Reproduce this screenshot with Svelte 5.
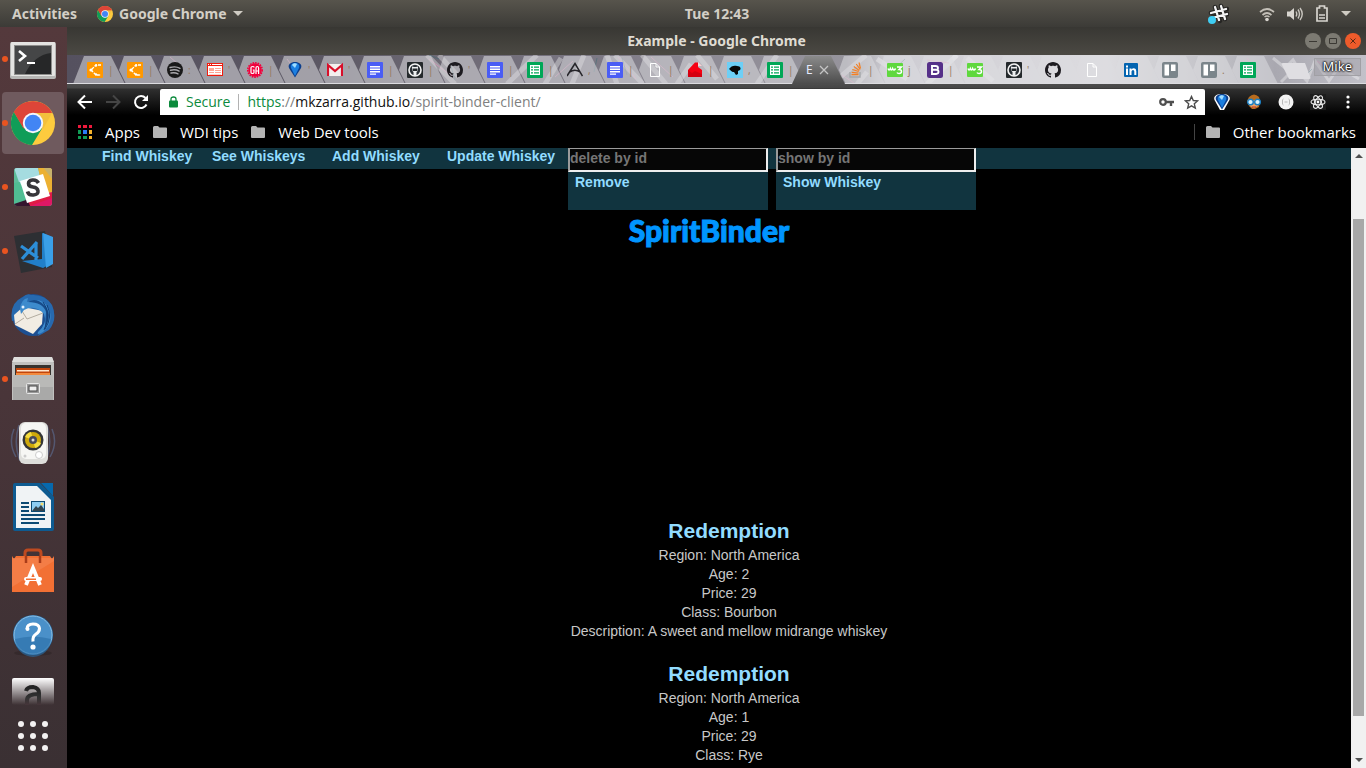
<script>
  const before = [
    ['cc', '|'], ['cc', '|'], ['spotify', ':'], ['news', "'"], ['ga', '|'], ['balloon', "'"],
    ['gmail', "'"], ['docs', '|'], ['ghbox', '|'], ['github', "'"], ['docs', '|'], ['sheets', '|'],
    ['compass', ','], ['docs', '|'], ['file', '|'], ['house', '|'], ['bird', ','], ['sheets', '|']
  ];
  const after = [
    ['stack', '|'], ['w3', 'j'], ['bootstrap', '|'], ['w3', ''], ['ghbox', "'"], ['github', ''],
    ['file', ''], ['linkedin', ''], ['trello', ''], ['trello', '.'], ['sheets', '']
  ];
  const links = ['Find Whiskey', 'See Whiskeys', 'Add Whiskey', 'Update Whiskey'];
  const forms = [
    { id: 'delete-id', hint: 'delete by id', action: 'Remove' },
    { id: 'show-id', hint: 'show by id', action: 'Show Whiskey' }
  ];
  const whiskeys = [
    { name: 'Redemption', rows: ['Region: North America', 'Age: 2', 'Price: 29', 'Class: Bourbon', 'Description: A sweet and mellow midrange whiskey'] },
    { name: 'Redemption', rows: ['Region: North America', 'Age: 1', 'Price: 29', 'Class: Rye'] }
  ];
  const dock = [
    ['Terminal', true], ['Chrome', true], ['Slack', true], ['Code', true], ['Thunderbird', false],
    ['Files', true], ['Rhythmbox', false], ['Writer', false], ['Software', false], ['Help', false]
  ];
  const dots = [5, 17, 29];
  const octocat = 'M8 0C3.58 0 0 3.58 0 8c0 3.54 2.29 6.53 5.47 7.59.4.07.55-.17.55-.38 0-.19-.01-.82-.01-1.49-2.01.37-2.53-.49-2.69-.94-.09-.23-.48-.94-.82-1.13-.28-.15-.68-.52-.01-.53.63-.01 1.08.58 1.23.82.72 1.21 1.87.87 2.33.66.07-.52.28-.87.51-1.07-1.78-.2-3.64-.89-3.64-3.95 0-.87.31-1.59.82-2.15-.08-.2-.36-1.02.08-2.12 0 0 .67-.21 2.2.82.64-.18 1.32-.27 2-.27s1.36.09 2 .27c1.53-1.04 2.2-.82 2.2-.82.44 1.1.16 1.92.08 2.12.51.56.82 1.27.82 2.15 0 3.07-1.87 3.75-3.65 3.95.29.25.54.73.54 1.48 0 1.07-.01 1.93-.01 2.2 0 .21.15.46.55.38A8.01 8.01 0 0 0 16 8c0-4.42-3.58-8-8-8z';
</script>

{#snippet chrome(size)}
  <svg width={size} height={size} viewBox="0 0 44 44" aria-hidden="true">
    <circle cx="22" cy="22" r="22" fill="#fdcb3e" />
    <path d="M2.9 11A22 22 0 0 1 41.1 11.5L22 12 13 27z" fill="#dd4538" />
    <path d="M41.1 12H22l-4 4 14 12z" fill="#e9b43a" opacity=".5" />
    <path d="M2.9 11A22 22 0 0 0 21 44L31 27.5 22 24 12 26z" fill="#109d58" />
    <path d="M2.9 11 12.5 27.5 22 22 22 12H41A22 22 0 0 0 2.9 11z" fill="#dd4538" />
    <circle cx="22" cy="22" r="10.2" fill="#f4f6fb" />
    <circle cx="22" cy="22" r="8.3" fill="#4285f4" />
  </svg>
{/snippet}

{#snippet balloon()}
  <path d="M8 15.5 2 6C.5 2.5 4 0 8 0s7.5 2.5 6 6z" fill="#0b3e8c" />
  <path d="M8 14 4 6c-1-3 1-5 4-5s5 2 4 5z" fill="#1c7fe0" />
  <path d="M5 3c1-2 4-2 5-1L8 6z" fill="#9fdcff" />
{/snippet}

{#snippet favicon(name)}
  <svg class="fav" width="16" height="16" viewBox="0 0 16 16" aria-hidden="true">
    {#if name === 'cc'}
      <rect width="16" height="16" rx="1" fill="#ff9800" />
      <path d="M14 3H9L4 8l5 5h5" fill="none" stroke="#fff" stroke-width="1.3" stroke-dasharray="3 1" />
      <circle cx="4" cy="8" r="1.6" fill="#fff" /><circle cx="9" cy="3.5" r="1.2" fill="#fff" /><circle cx="9" cy="12.5" r="1.2" fill="#fff" />
    {:else if name === 'spotify'}
      <circle cx="8" cy="8" r="8" fill="#191919" />
      <path d="M3 5.5c3.5-1 7.5-.6 10 .8M3.5 8.3c3-.8 6.4-.4 8.600.8M4 11c2.500-.6 5-.3 7 .8" fill="none" stroke="#aaa9ad" stroke-width="1.4" stroke-linecap="round" />
    {:else if name === 'news'}
      <path d="M0 1h16v13H0z" fill="#f01c0e" /><path d="M1 4h14v9H1zM1 2h1v1H1zM3 2h1v1H3zM5 2h10v1H5z" fill="#fff" />
      <path d="M2 6h5v3H2zM8 6h6v1H8zM8 8h6v1H8zM2 10h5v1H2zM8 10h6v1H8zM2 12h12v.5H2z" fill="#ffa694" />
    {:else if name === 'ga'}
      <circle cx="8" cy="8" r="6.7" fill="#f2003c" /><circle cx="8" cy="8" r="7.2" fill="none" stroke="#f2003c" stroke-width="1.6" stroke-dasharray="1.6 1" />
      <path d="M7 5.5V5Q7 4.500 5.500 4.500T4 5.500v5q0 1 1.500 1T7 10.500V8H5.800M9 12V6q0-1.500 1.300-1.500T11.600 6v6M9 9h2.600" fill="none" stroke="#fff" stroke-width="1.2" />
    {:else if name === 'balloon'}
      {@render balloon()}
    {:else if name === 'gmail'}
      <path d="M0 2h16v12H0z" fill="#f3efee" /><path d="M1 14V3l7 6 7-6v11" fill="none" stroke="#d80f2a" stroke-width="2.2" />
    {:else if name === 'docs'}
      <rect width="16" height="16" rx="1" fill="#4a5df5" /><path d="M3 4h10v1.400H3zM3 6.500h10v1.400H3zM3 9h10v1.400H3zM3 11.500h6v1.200H3z" fill="#fff" />
    {:else if name === 'sheets'}
      <rect width="16" height="16" rx="1" fill="#00a757" /><path d="M3 3h10v10H3z" fill="#fff" /><path d="M4 4.500h2v1.200H4zM7 4.500h5v1.200H7zM4 7.300h2v1.200H4zM7 7.300h5v1.200H7zM4 10.200h2v1.200H4zM7 10.200h5v1.200H7z" fill="#00a757" />
    {:else if name === 'ghbox'}
      <rect width="16" height="16" rx="1" fill="#24292c" /><circle cx="8" cy="8" r="6" fill="#2b3137" stroke="#f4f4f4" stroke-width="1.6" />
      <path d="M5 4.500 7 5h2l2-.5v4L9.500 10v4h-3v-4L5 8.500z" fill="#eef0f1" /><path d="M5.500 6.500h5v2.500h-5z" fill="#24292c" />
    {:else if name === 'github'}
      <path d={octocat} fill="#1d1b20" />
    {:else if name === 'compass'}
      <path d="M0 14 8 1.500 15.500 14M2.500 10Q8 6.500 13 10" fill="none" stroke="#26252a" stroke-width="1.5" />
    {:else if name === 'file'}
      <path d="M3.500 1.500h5.500l3.500 3.500v9.500h-9zM9 1.500V5h3.500" fill="none" stroke="#fff" />
    {:else if name === 'house'}
      <path d="M1 8 8 .5h3V5l4 3v7H1z" fill="#f60012" /><path d="M11 0v4h4z" fill="#fbd0d2" /><path d="m1 8 4 3 3-2 7 3v3H1z" fill="#d50010" />
    {:else if name === 'bird'}
      <rect width="16" height="16" fill="#6dcff6" /><path d="M2 7c2-3 5-4 8-3 4 0 4 3 3 4l-2 1v3l-2 1-2-3c-3 0-3-2-5-3z" fill="#090909" />
    {:else if name === 'stack'}
      <path d="M3 10v5h10v-5" fill="none" stroke="#a5a8ab" stroke-width="1.4" /><path d="M4.500 12.700h7M4.700 10.300l6.800.8M5.300 7.500l6.400 2M6.800 4.500l5.500 4M9.300 2l3.900 5.500M12 .5l1.500 6" stroke="#f48024" stroke-width="1.2" />
    {:else if name === 'w3'}
      <rect y="1" width="16" height="14" rx="1" fill="#5fd83e" /><path d="M1 6.500q1 3 2.300 0 1 3 2.300 0 1 3 3 0M10 5h4.500L12 7.500q2.500 0 2.500 2t-2.500 2q-1.500 0-2-1" fill="none" stroke="#fff" stroke-width="1.5" />
    {:else if name === 'bootstrap'}
      <rect width="16" height="16" rx="2.5" fill="#563089" /><path d="M5 4h3.500Q11 4 11 6T8.500 7.800H5zM5 7.800h4q2.500 0 2.500 2T9 12H5z" fill="none" stroke="#fff" stroke-width="1.9" />
    {:else if name === 'linkedin'}
      <rect x="1" y="1" width="14" height="14" rx="1" fill="#0364b0" /><path d="M3 6.500h2V13H3zM3 3.500h2v2H3zM6.500 6.500h2v1q1-1.300 2.500-1.200 2.300.2 2.300 3V13h-2V9.500Q11.300 8 10 8T8.500 9.500V13h-2z" fill="#fff" />
    {:else if name === 'trello'}
      <rect width="16" height="16" rx="2" fill="#7b858b" /><path d="M2.500 2.500h4.500v11H2.500zM9 2.500h4.500v6.500H9z" fill="#fff" />
    {/if}
  </svg>
{/snippet}

{#snippet tab(t, narrow)}
  <div class="tab" class:narrow>
    {@render favicon(t[0])}
    {#if t[1]}<span class="bit">{t[1]}</span>{/if}
  </div>
{/snippet}

{#snippet folder()}
  <svg width="14" height="12" viewBox="0 0 14 12" aria-hidden="true"><path d="M0 1.500Q0 0 1.500 0H5l1.500 1.500H13q1 0 1 1V11q0 1-1 1H1q-1 0-1-1z" fill="#b4b4b4" /></svg>
{/snippet}

{#snippet dockIcon(name)}
  {#if name === 'Chrome'}
    {@render chrome(44)}
  {:else}
    <svg width="48" height="48" viewBox="0 0 48 48" aria-hidden="true">
      {#if name === 'Terminal'}
        <rect x="1" y="7" width="46" height="37" rx="2" fill="#b7b7b5" /><rect x="2" y="7" width="44" height="34" rx="1" fill="#e4e4e2" />
        <path d="M5 10h38v30H5z" fill="#8d8d8b" /><path d="M6 11h36v28H6z" fill="#262728" /><path d="M6 11h36v7Q25 20 16 39H6z" fill="#454647" />
        <path d="m10 16 6 5-6 5" fill="none" stroke="#fff" stroke-width="2.6" /><path d="M18 27h8v2h-8z" fill="#fff" />
      {:else if name === 'Slack'}
        <clipPath id="sl"><rect x="5" y="5" width="38" height="38" rx="3" /></clipPath>
        <g clip-path="url(#sl)">
          <path d="M0 0h48v48H0z" fill="#5dbd9a" /><path d="M5 5h24l3 12-21 5z" fill="#a5dce0" /><path d="M29 5h14v27l-7 2z" fill="#ecb032" /><path d="M34 4h9v12z" fill="#c5b06c" />
          <path d="M18 36 43 29v16H18z" fill="#e01765" /><path d="M17 37l26-7v5l-25 9z" fill="#df1b45" /><path d="M5 38l13-2 4 9H5z" fill="#35152f" /><path d="M5 20l6-1 6 18-12 4z" fill="#50bd93" />
          <path d="m11 18 23-7 7 22-23 7z" fill="#fff" />
        </g>
        <path d="M29.500 20q-2-3.500-6-3t-4 3.500 4.500 3.500 5 4-4.500 4-6-3.500" fill="none" stroke="#37363a" stroke-width="3.6" />
      {:else if name === 'Code'}
        <path d="m5 9 31-5 7 36-31 6z" fill="#2d2f33" /><path d="M33 6v26l-20 2 21 7 9-5V10z" fill="#217fc9" /><path d="M34 6l10 4v27l-7 4z" fill="#3a9fe8" />
        <path d="M12 19 29 31M28 15 13 32M27 17v16" fill="none" stroke="#2c8ed8" stroke-width="3.2" />
      {:else if name === 'Thunderbird'}
        <circle cx="24" cy="24" r="21" fill="#1d4f91" /><path d="M3 30Q0 12 14 6q4-4 8-2 14-1 21 10 6 14-3 25l-11 6 7-14-1-10z" fill="#2769ae" />
        <path d="M5 24 14 16l20 4-1 13-9 10L6 34z" fill="#f1ece3" /><path d="m13 20 5 8 16-6M6 33l9-6" fill="none" stroke="#b3aca0" />
        <path d="M11 18q1-10 8-11l-1 4q15-6 22 7 5 13-6 23-7 4-5 0 10-9 6-18Q26 13 15 19l-3 4z" fill="#3d8bcd" /><path d="M19 11q15 0 18 10l-1 15q8-13-1-22-8-8-16-3z" fill="#174b8a" /><path d="M38 14q6 12-2 24M34 11q9 12 1 28" fill="none" stroke="#123f78" /><circle cx="14" cy="16" r="1.5" fill="#e0f0ff" />
      {:else if name === 'Files'}
        <path d="M5 2h38l2 6v37H3V8z" fill="#c1c1bf" /><path d="M5 2h38l2 5H3z" fill="#dededc" /><path d="M6 10h36v12H6z" fill="#37332f" />
        <path d="M7 13h34v8H7z" fill="#c1450c" /><path d="M8 15h32v1.500H8z" fill="#ffe4cb" /><path d="M7 18h34v3H7z" fill="#f38a3d" /><path d="M4 20h40v25H4z" fill="#a9a9a8" /><path d="M4 20h40v12H4z" fill="#b9b9b7" />
        <rect x="17.5" y="28.5" width="13" height="10" rx="1" fill="#999" stroke="#e8e8e8" /><rect x="20" y="31" width="8" height="5" fill="#eee" stroke="#444" />
      {:else if name === 'Rhythmbox'}
        <path d="M5 10Q-1 24 7 38M10 6Q4 24 11 42M43 10q6 14-2 28M38 6q6 18-1 36" fill="none" stroke="#5d6f96" stroke-width="1.5" opacity=".6" />
        <rect x="10" y="3" width="29" height="42" rx="6" fill="#dededb" /><rect x="12" y="4" width="25" height="36" rx="5" fill="#f6f6f4" />
        <circle cx="24" cy="21" r="10.5" fill="#343638" /><circle cx="24" cy="21" r="8" fill="#cda80b" /><path d="M24 21 16 18a8 8 0 0 1 6-5zM24 21l8 3a8 8 0 0 1-6 5z" fill="#f5dc3e" /><circle cx="24" cy="21" r="4" fill="#474959" /><circle cx="24" cy="21" r="1.5" fill="#dadada" />
        <circle cx="30" cy="36" r="3.5" fill="#fff" stroke="#ccc" /><circle cx="16" cy="37" r="1.5" fill="#ccc" />
      {:else if name === 'Writer'}
        <path d="M6 0h25l14 14v32q0 2-2 2H6q-2 0-2-2V2q0-2 2-2z" fill="#0e5b91" /><path d="M7 3h21l14 14v28H7z" fill="#f0f3f5" /><path d="M32 0h12v13z" fill="#0769ad" />
        <path d="M12 19h8v2h-8zM12 23h8v2h-8zM12 27h8v2h-8zM12 31h24v2H12zM12 35h24v2H12zM12 39h18v2H12z" fill="#0d4a73" /><path d="M22 18h14v11H22z" fill="#0d4a73" /><path d="M23 19h12v9H23z" fill="#8dcdf2" /><circle cx="33" cy="21" r="1.5" fill="#f6db6c" /><path d="m23 28 4-5 2 2 3-3 3 4v2z" fill="#33454f" />
      {:else if name === 'Software'}
        <path d="M16 14V6q0-3 3-3h10q3 0 3 3v8" fill="none" stroke="#be4a20" stroke-width="3" /><path d="M3 9l2 3 2-3h34l2 3 2-3v36H3z" fill="#f27034" /><path d="M3 11h42v3L3 40z" fill="#f58654" opacity=".6" /><path d="M17 9v7M31 9v7" stroke="#a93c19" stroke-width="2.5" />
        <path d="m17 38 7-17 7 17" fill="none" stroke="#fff" stroke-width="3.8" /><rect x="15" y="30" width="18" height="4" rx="2" fill="#fff" /><path d="M17 31.500h10v1.500H17z" fill="#f27034" />
      {:else if name === 'Help'}
        <ellipse cx="24" cy="42" rx="19" ry="3" fill="#271d20" opacity=".4" /><circle cx="24" cy="24" r="20" fill="#286ea8" /><circle cx="24" cy="24" r="19" fill="#4a90c9" stroke="#8dbfe2" /><path d="M6 28q18-5 36 0a18 18 0 0 1-36 0z" fill="#2a6ea7" opacity=".6" />
        <path d="M18 18q0-5 6-5t6.500 4.500q0 3.500-4 6-3 2-2.500 7" fill="none" stroke="#fff" stroke-width="3" /><circle cx="18.5" cy="18" r="2" fill="#fff" /><circle cx="24" cy="36" r="2.6" fill="#fff" />
      {/if}
    </svg>
  {/if}
{/snippet}

<div class="desktop">
  <header class="panel">
    <div class="left">
      <button>Activities</button>
      <button class="app">{@render chrome(16)}<span>Google Chrome</span><i class="caret"></i></button>
    </div>
    <time>Tue 12:43</time>
    <div class="tray">
      <svg width="22" height="22" viewBox="0 0 22 22" aria-hidden="true">
        <path d="m8 4 5 14M14 3l4 13M4 10l16-4M5 15l16-4" stroke="#262523" stroke-width="4.5" stroke-linecap="round" /><path d="m8 4 4 13M14 3l4 13M4 10l15-4M5 15l15-4" stroke="#f5f5f5" stroke-width="2.3" stroke-linecap="round" /><circle cx="5" cy="17" r="4" fill="#3fcdf3" />
      </svg>
      <svg class="wifi" width="16" height="16" viewBox="0 0 16 16" aria-hidden="true"><path d="M1 6q7-6 14 0M3.500 9q4.500-4 9 0" fill="none" stroke="#c4c0b8" stroke-width="1.7" /><path d="M5.500 11q2.500-2 5 0" fill="none" stroke="#c4c0b8" stroke-width="1.5" /><circle cx="8" cy="13.5" r="1.8" fill="#d8d5cf" /></svg>
      <svg width="16" height="16" viewBox="0 0 16 16" aria-hidden="true"><path d="M0 5.500h3L7 2v12l-4-3.500H0z" fill="#d8d5cf" /><path d="M9 5.500q1.500 2.500 0 5M11 3.500q3 4.500 0 9M13 2q4.500 6 0 12" fill="none" stroke="#c9c6bf" stroke-width="1.4" /></svg>
      <svg width="14" height="17" viewBox="0 0 14 17" aria-hidden="true"><path d="M2 3h2.500V1h5v2H12v13H2zM4 10h6M4 13h6" fill="none" stroke="#d8d5cf" stroke-width="1.7" /></svg>
      <i class="caret"></i>
    </div>
  </header>

  <div class="body">
    <aside class="dock">
      {#each dock as [name, running]}
        <button class="launcher" class:current={name === 'Chrome'} class:running aria-label={name}>{@render dockIcon(name)}</button>
      {/each}
      <button class="amazon" aria-label="Amazon">
        <svg width="42" height="27" viewBox="0 0 42 27" aria-hidden="true">
          <defs><linearGradient id="az" x2="0" y2="1"><stop stop-color="#fff" /><stop offset="1" stop-color="#fff" stop-opacity="0" /></linearGradient><linearGradient id="ak" x2="0" y2="1"><stop stop-color="#222" /><stop offset=".6" stop-color="#333" /><stop offset="1" stop-color="#46353a" /></linearGradient></defs>
          <rect width="42" height="27" rx="2" fill="url(#az)" /><path d="M14 13q1-4 7-4 6 1 6 6v12M27 16q-12 0-12 6v5" fill="none" stroke="url(#ak)" stroke-width="4" />
        </svg>
      </button>
      <button class="apps" aria-label="Show Applications">
        <svg width="34" height="34" viewBox="0 0 34 34" aria-hidden="true">{#each dots as y}{#each dots as x}<circle cx={x} cy={y} r="3" fill="#f3f1f1" />{/each}{/each}</svg>
      </button>
    </aside>

    <main class="window">
      <div class="titlebar">
        <span>Example - Google Chrome</span>
        <div class="controls">
          <button aria-label="Minimize"><svg width="16" height="16" viewBox="0 0 16 16"><circle cx="8" cy="8" r="8" fill="#7c7a72" /><path d="M4 8.500h8" stroke="#3b3934" /></svg></button>
          <button aria-label="Maximize"><svg width="16" height="16" viewBox="0 0 16 16"><circle cx="8" cy="8" r="8" fill="#7c7a72" /><path d="M4.500 5.500h7v5h-7z" fill="none" stroke="#3b3934" /></svg></button>
          <button aria-label="Close"><svg width="16" height="16" viewBox="0 0 16 16"><circle cx="8" cy="8" r="8" fill="#ee5b2b" /><path d="m5.500 5.500 5 5m0-5-5 5" stroke="#5a2a14" /></svg></button>
        </div>
      </div>

      <div class="tabs">
        <svg class="art" viewBox="0 0 1299 29" preserveAspectRatio="none" aria-hidden="true">
          <g fill="none" stroke="#fff" stroke-width="5" opacity=".35">
            <path d="m360 0 28 29M372 0l20 22M440 29l30-29M478 29l16-26M505 29l12-29M540 0l10 29M548 0l28 29M575 0l24 29M610 29l14-20M630 0l20 24M690 29l20-29M765 29l34-29M790 29l10-12M810 4l30 20M860 29l30-29M900 3l26 23" />
          </g>
          <g fill="none" stroke="#ef8fc0" stroke-width="1" opacity=".5"><path d="m103 2 8 7M220 4l6 8M362 4l24 18M488 22l18-16M551 2l18 22M584 2l22 20M775 20l12 8M860 5l22 3M1180 3l10 12M1250 6l14 10" /></g>
          <g fill="none" stroke="#3b6d75" stroke-width="1" opacity=".5"><path d="m362 0 10 4M383 8l5 17M530 3l-3 14M555 3l5 17M820 21l18-17M1235 24l10-10" /></g>
          <g fill="none" stroke="#fff" stroke-width="3" opacity=".35"><path d="m1206 3 12 10 8-8 10 16M1214 27l14-14 12 13 8-20 14 20 10-14 20 12" /></g>
        </svg>
        {#each before as t}{@render tab(t, false)}{/each}
        <div class="tab active"><span class="cut">E</span><button aria-label="Close tab"><svg width="10" height="10" viewBox="0 0 10 10"><path d="m1 1 8 8m0-8-8 8" stroke="#c5c5c5" stroke-width="1.3" /></svg></button></div>
        {#each after as t, i}{@render tab(t, i > 2)}{/each}
        <button class="newtab" aria-label="New tab"></button>
        <span class="user">Mike</span>
      </div>

      <div class="toolbar">
        <button aria-label="Back"><svg width="16" height="16" viewBox="0 0 16 16"><path d="M8 1.500 1.500 8 8 14.500M2 8h13" fill="none" stroke="#fff" stroke-width="2" /></svg></button>
        <button aria-label="Forward"><svg width="16" height="16" viewBox="0 0 16 16"><path d="M8 1.500 14.500 8 8 14.500M14 8H1" fill="none" stroke="#454545" stroke-width="2" /></svg></button>
        <button aria-label="Reload"><svg width="16" height="16" viewBox="0 0 16 16"><path d="M13.500 10.500A6 6 0 1 1 12.500 4" fill="none" stroke="#fff" stroke-width="2" /><path d="M15 1v6H9z" fill="#fff" /></svg></button>
        <div class="omni">
          <svg width="9" height="12" viewBox="0 0 9 12" aria-hidden="true"><path d="M2 5V3q0-2 2.500-2T7 3v2" fill="none" stroke="#0b8a3c" stroke-width="1.3" /><rect y="4.5" width="9" height="7" rx="1" fill="#0b8a3c" /></svg>
          <span class="secure">Secure</span>
          <span class="url"><b>https</b><i>://</i>mkzarra.github.io<i>/spirit-binder-client/</i></span>
          <svg width="15" height="12" viewBox="0 0 15 12" aria-hidden="true"><circle cx="4" cy="6" r="2.8" fill="none" stroke="#4f4f4f" stroke-width="2.2" /><path d="M7 6h8M12 6v4" fill="none" stroke="#4f4f4f" stroke-width="2.4" /></svg>
          <svg class="star" width="15" height="15" viewBox="0 0 15 15" aria-hidden="true"><path d="m7.500 1.500 1.800 4 4.200.4-3.200 2.900 1 4.200-3.800-2.200L3.700 13l1-4.200L1.500 5.900l4.200-.4z" fill="none" stroke="#4c4c4c" stroke-width="1.4" /></svg>
        </div>
        <div class="exts">
          <svg width="16" height="16" viewBox="0 0 16 16" aria-hidden="true"><path d="M6 16 .5 6C-1 2 3 0 8 0s9 2 7.500 6L10 16z" fill="#fff" />{@render balloon()}</svg>
          <svg width="16" height="16" viewBox="0 0 16 16" aria-hidden="true"><path d="M3 3q5-5 10 0l1 4-1 6-4 2H6l-3-3-2-5z" fill="#b86b1d" /><path d="M4 6h8v6l-4 2-4-2z" fill="#f2a565" /><circle cx="4.5" cy="8" r="2.8" fill="#d8f3ff" stroke="#1a7fc4" stroke-width="1.4" /><circle cx="11.5" cy="8" r="2.8" fill="#d8f3ff" stroke="#1a7fc4" stroke-width="1.4" /><path d="M6 13h4" stroke="#b3302c" /></svg>
          <svg width="16" height="16" viewBox="0 0 16 16" aria-hidden="true"><circle cx="8" cy="8" r="7.5" fill="#f3f3f3" /><path d="M5.500 5Q4 5 4.500 8q-.5 3 1 3M10.500 5q1.500 0 1 3 .5 3-1 3M6.500 8h3" fill="none" stroke="#b9b9b9" /></svg>
          <svg width="16" height="16" viewBox="0 0 16 16" aria-hidden="true"><rect width="16" height="16" fill="#1c1c1c" /><g fill="none" stroke="#ececec" stroke-width="1.1"><ellipse cx="8" cy="8" rx="7" ry="2.8" /><ellipse cx="8" cy="8" rx="7" ry="2.8" transform="rotate(60 8 8)" /><ellipse cx="8" cy="8" rx="7" ry="2.8" transform="rotate(120 8 8)" /></g><circle cx="8" cy="8" r="1.4" fill="#fff" /></svg>
          <svg class="more" width="4" height="14" viewBox="0 0 4 14" aria-hidden="true"><circle cx="2" cy="2" r="1.6" fill="#fff" /><circle cx="2" cy="7" r="1.6" fill="#fff" /><circle cx="2" cy="12" r="1.6" fill="#fff" /></svg>
        </div>
      </div>

      <div class="bookmarks">
        <svg width="14" height="14" viewBox="0 0 14 14" aria-hidden="true"><path d="M0 0h3v3H0zM5 0h4v3H5zM11 0h3v3h-3z" fill="#f0193c" /><path d="M0 5h3v4H0zM0 11h3v3H0zM5 11h4v3H5z" fill="#119c55" /><path d="M5 5h4v4H5z" fill="#2c7cf6" /><path d="M11 5h3v4h-3zM11 11h3v3h-3z" fill="#f5b32c" /></svg>
        <a href="#apps">Apps</a>
        {@render folder()}<a href="#wdi">WDI tips</a>
        {@render folder()}<a href="#web">Web Dev tools</a>
        <div class="other">{@render folder()}<a href="#other">Other bookmarks</a></div>
      </div>

      <div class="view">
        <div class="page">
          <nav>
            <div class="links">{#each links as l}<a href="#nav">{l}</a>{/each}</div>
            {#each forms as f}
              <form>
                <input id={f.id} type="text" aria-label={f.hint} placeholder={f.hint} />
                <button type="button">{f.action}</button>
              </form>
            {/each}
          </nav>
          <h1>SpiritBinder</h1>
          <ul>
            {#each whiskeys as w}
              <li>
                <h2>{w.name}</h2>
                {#each w.rows as r}<p>{r}</p>{/each}
              </li>
            {/each}
          </ul>
        </div>
        <div class="scroll" aria-hidden="true">
          <i class="up"></i><div class="track"><div class="thumb"></div></div><i class="down"></i>
        </div>
      </div>
    </main>
  </div>
</div>

<style>
  :global(body) { background: #000; overflow: hidden; }
  .desktop { display: flex; flex-direction: column; height: 100vh; overflow: hidden; font: 14px/18px "Noto Sans", sans-serif; color: #dfdbd2; }
  button { border: 0; padding: 0; background: none; color: inherit; font: inherit; display: flex; align-items: center; }
  a { color: inherit; text-decoration: none; }
  svg { display: block; flex: none; }

  .panel { height: 27px; flex: none; display: grid; grid-template-columns: 1fr auto 1fr; align-items: center; background: linear-gradient(#57544c, #3c3b37); font-weight: 700; line-height: 16px; color: #d3cfc6; }
  .left { display: flex; gap: 20px; padding-left: 12px; }
  .app { gap: 6px; }
  .caret { border: 5px solid transparent; border-top-color: #cfcbc3; border-bottom: 0; }
  .panel time { padding-left: 68px; }
  .tray { display: flex; justify-content: flex-end; align-items: center; gap: 12px; padding-right: 15px; }
  .wifi { margin-left: 18px; }

  .body { flex: 1; display: flex; min-height: 0; }
  .dock { width: 67px; flex: none; display: flex; flex-direction: column; padding-top: 1px; box-sizing: border-box; background: linear-gradient(#54393c, #493539 50%, #3a3033); }
  .launcher { position: relative; flex: none; height: 62px; width: 62px; margin: 0 2px 2px; justify-content: center; border-radius: 4px; }
  .current { background: #6f5a5e; }
  .running::before { content: ""; position: absolute; left: 0; top: 28px; width: 6px; height: 6px; border-radius: 3px; background: #e95420; }
  .amazon { margin: 10px 0 0 12px; }
  .apps { margin: auto 0 15px 16px; }

  .window { flex: 1; min-width: 0; display: flex; flex-direction: column; }
  .titlebar { height: 28px; flex: none; display: grid; grid-template-columns: 1fr auto 1fr; align-items: center; background: linear-gradient(#383733, #4b4943); font-weight: 700; }
  .titlebar span { grid-column: 2; }
  .controls { display: flex; gap: 4px; justify-content: flex-end; padding-right: 5px; }

  .tabs { position: relative; height: 29px; flex: none; display: flex; padding-left: 12px; box-sizing: border-box; overflow: hidden; isolation: isolate; background: linear-gradient(90deg, #55515f, #5c5864 20%, #6b6772 27%, #77737f 38%, #8f8c96 50%, #96949c 60%, #cdccd2 63%, #dddce0 80%, #c3c3c8 88%, #a9a8b0 93%, #c2c1c9); }
  .tabs::after { content: ""; position: absolute; left: 0; right: 0; bottom: 0; height: 1px; background: #dcdce0; z-index: -1; }
  .art { position: absolute; inset: 0; width: 100%; height: 100%; z-index: -2; }
  .tab { position: relative; flex: none; width: 40px; display: flex; align-items: center; gap: 5px; box-sizing: border-box; padding-left: 8px; }
  .narrow { width: 39px; }
  .tab::before { content: ""; position: absolute; z-index: -1; left: -6px; width: 52px; top: 1px; bottom: 0; background: #dcdce0; opacity: .55; clip-path: polygon(11px 0, 38px 0, 52px 100%, 13px 100%, 6px 50%); }
  .art + .tab::before { clip-path: polygon(11px 0, 38px 0, 52px 100%, 0 100%); }
  .active::before { left: -7px; width: 53px; background: linear-gradient(#8b8b8b, #4c4c4c); opacity: 1; z-index: 0; clip-path: polygon(13px 0, 39px 0, 53px 100%, 0 100%); }
  .active > * { position: relative; }
  .cut { width: 9px; font-size: 12px; color: #e6ebff; }
  .active { gap: 4px; padding-left: 7px; }
  .bit { line-height: 14px; font-size: 10px; color: #97795f; }
  .newtab { width: 30px; height: 16px; margin: 8px 0 0 10px; background: #dfdee2; border-radius: 2px; clip-path: polygon(0 0, 24px 0, 100% 100%, 8px 100%); }
  .user { margin: 3px 5px 0 auto; height: 16px; line-height: 15px; padding: 0 8px; border: 1px solid #a1a0a5; color: #fff; font-size: 13px; background: #9b99a066; text-shadow: 0 0 2px #000, 0 0 2px #000, 0 0 2px #000; }

  .toolbar { height: 31px; margin-top: 1px; margin-bottom: -1px; flex: none; display: flex; align-items: flex-end; gap: 12px; padding-left: 10px; background: linear-gradient(#4d4d4d, #464646 4px, #2f2f2f 5px, #000); }
  .toolbar { margin: 0; }
  .toolbar button { height: 26px; }
  .omni { flex: 1; height: 26px; display: flex; align-items: center; margin: 0 -3px 0 -1px; padding: 0 6px 0 9px; background: #fff; border-radius: 2px 2px 0 0; color: #111; font: 14px/18px "Open Sans", sans-serif; }
  .secure { color: #0b8a3c; padding: 0 8px; margin-right: 8px; border-right: 1px solid #b2b2b2; line-height: 16px; }
  .url { flex: 1; }
  .url b { font-weight: 400; color: #0b8a3c; }
  .url i { font-style: normal; color: #808080; }
  .star { margin-left: 10px; }
  .exts { display: flex; gap: 16px; height: 26px; align-items: center; padding-right: 16px; }
  .more { margin-left: 4px; }

  .bookmarks { height: 33px; flex: none; display: flex; align-items: center; gap: 13px; padding: 0 10px 0 11px; box-sizing: border-box; background: #000; color: #fff; font: 15px/18px "Open Sans", sans-serif; }
  .other { margin-left: auto; display: flex; align-items: center; gap: 13px; border-left: 1px solid #444; padding-left: 11px; line-height: 16px; }

  .view { flex: 1; min-height: 0; display: flex; background: #000; }
  .page { flex: 1; min-width: 0; overflow: hidden; font: 14px/19px "Liberation Sans", Arial, sans-serif; color: #c8c8c8; text-align: center; }
  nav { height: 21px; display: flex; align-items: flex-start; gap: 8px; padding-left: 35px; background: #11343f; color: #92dcff; font-weight: 700; text-align: left; }
  .links { display: grid; grid-template-columns: 110px 120px 115px 113px; line-height: 16px; }
  form { width: 200px; height: 62px; background: #11343f; }
  input { display: block; box-sizing: border-box; width: 100%; height: 24px; padding: 0 0 3px; border: 2px solid #eee; border-width: 1px 2px 2px; border-color: #9a9a9a #eee #eee #9a9a9a; background: #060606; color: #ddd; font: inherit; outline: 0; }
  input::placeholder { color: #757575; opacity: 1; }
  form button { padding: 1px 7px; line-height: 19px; }
  h1 { margin: 43px 0 0; font: 900 30px/36px Lato, sans-serif; color: #0095ff; -webkit-text-stroke: 1px #0095ff; }
  ul { list-style: none; margin: 250px 0 0; padding: 0 0 0 40px; }
  h2 { margin: 0; padding: 21px 0 4px; font-size: 21px; line-height: 23px; color: #92dcff; }
  p { margin: 0; }

  .scroll { width: 15px; flex: none; display: flex; flex-direction: column; align-items: center; background: #f1f1f1; }
  .up { border: 4px solid transparent; border-top: 0; border-bottom-color: #505050; margin: 6px 0; }
  .down { border: 4px solid transparent; border-bottom: 0; border-top-color: #505050; margin: 6px 0; }
  .track { flex: 1; align-self: stretch; display: flex; flex-direction: column; padding: 0 2px; }
  .track::before { content: ""; flex: 55; }
  .track::after { content: ""; flex: 36; }
  .thumb { flex: 497; background: #a8a8a8; }
</style>
